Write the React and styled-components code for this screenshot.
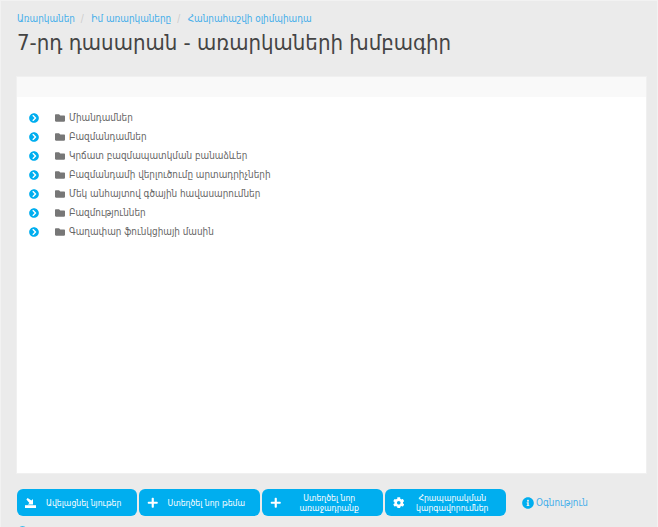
import React from 'react';
import styled, { createGlobalStyle } from 'styled-components';
import { FaChevronCircleRight, FaFolder, FaPlus, FaCog, FaInfoCircle } from 'react-icons/fa';

const GlobalStyle = createGlobalStyle`
  html, body {
    margin: 0;
    padding: 0;
    background: #ebebeb;
  }
  body {
    font-family: "DejaVu Sans", "Noto Sans", sans-serif;
    font-stretch: condensed;
    color: #555;
  }
`;

const Page = styled.div`
  height: 527px;
  overflow: hidden;
  box-sizing: border-box;
  padding: 9px 11px 0 16px;
  border: 1px solid #f2f2f2;
  border-bottom: 0;
`;

const Breadcrumb = styled.div`
  display: flex;
  align-items: center;
  height: 16px;
  font-size: 9.85px;
`;

const Crumb = styled.a`
  color: #45aeea;
`;

const Slash = styled.span`
  color: #ccc;
  padding: 0 7.5px 0 6px;
`;

const Title = styled.h1`
  margin: 2px 0 0;
  height: 49px;
  font-size: 22px;
  font-weight: 400;
  line-height: 30px;
  color: #444;
`;

const Panel = styled.div`
  height: 396px;
  background: #fff;
  outline: 1px solid #f0f0f0;
`;

const PanelHeading = styled.div`
  height: 20px;
  background: #f9f9f9;
`;

const TopicList = styled.ul`
  list-style: none;
  margin: 0;
  padding: 11px 0 0 12px;
`;

const Topic = styled.li`
  display: flex;
  align-items: center;
  height: 19px;
  font-size: 9.85px;
  color: #666;
`;

const Toggle = styled.span`
  display: flex;
  width: 26px;
  color: #00aeef;
  font-size: 10px;
`;

const FolderIcon = styled.span`
  display: flex;
  width: 14px;
  color: #777;
  font-size: 10px;
`;

const Toolbar = styled.div`
  display: flex;
  align-items: center;
  gap: 2px;
  margin-top: 16px;
`;

const Button = styled.button`
  display: flex;
  align-items: center;
  width: ${(p) => p.$width}px;
  height: 27px;
  padding: 0 8px 0 7.5px;
  border: 0;
  border-radius: 6px;
  background: #00aeef;
  color: #fff;
  font-family: inherit;
  font-stretch: inherit;
  font-size: 8.6px;
  line-height: 10px;
`;

const ButtonIcon = styled.span`
  display: flex;
  font-size: 11.5px;
  width: 14px;
`;

const ButtonLabel = styled.span`
  flex: 1;
  text-align: center;
`;

const HelpLink = styled.a`
  display: flex;
  align-items: center;
  gap: 2px;
  margin-left: 14px;
  font-size: 9.85px;
  color: #45aeea;
  svg {
    color: #00aeef;
    font-size: 12px;
  }
`;

const NextRow = styled.div`
  display: flex;
  margin-top: 10px;
  color: #00aeef;
  font-size: 11px;
`;

const topics = [
  'Միանդամներ',
  'Բազմանդամներ',
  'Կրճատ բազմապատկման բանաձևեր',
  'Բազմանդամի վերլուծումը արտադրիչների',
  'Մեկ անհայտով գծային հավասարումներ',
  'Բազմություններ',
  'Գաղափար ֆունկցիայի մասին',
];

const UploadIcon = () => (
  <svg width="11" height="10" viewBox="0 0 11 10" fill="currentColor">
    <path d="M2.6 0L6.4 2.6 8 1V6.6H2.8L4.4 5 1.4 1.4z" />
    <path d="M0 7.2h11V10H0z" />
  </svg>
);

const buttons = [
  { label: 'Ավելացնել նյութեր', width: 120, icon: <UploadIcon /> },
  { label: 'Ստեղծել նոր թեմա', width: 121, icon: <FaPlus /> },
  { label: 'Ստեղծել նոր առաջադրանք', width: 121, icon: <FaPlus /> },
  { label: 'Հրապարակման կարգավորումներ', width: 121, icon: <FaCog /> },
];

export default function App() {
  return (
    <Page>
      <GlobalStyle />
      <Breadcrumb>
        <Crumb>Առարկաներ</Crumb>
        <Slash>/</Slash>
        <Crumb>Իմ առարկաները</Crumb>
        <Slash>/</Slash>
        <Crumb>Հանրահաշվի օլիմպիադա</Crumb>
      </Breadcrumb>
      <Title>7-րդ դասարան - առարկաների խմբագիր</Title>
      <Panel>
        <PanelHeading />
        <TopicList>
          {topics.map((t) => (
            <Topic key={t}>
              <Toggle><FaChevronCircleRight /></Toggle>
              <FolderIcon><FaFolder /></FolderIcon>
              {t}
            </Topic>
          ))}
        </TopicList>
      </Panel>
      <Toolbar>
        {buttons.map((b) => (
          <Button key={b.label} $width={b.width}>
            <ButtonIcon>{b.icon}</ButtonIcon>
            <ButtonLabel>{b.label}</ButtonLabel>
          </Button>
        ))}
        <HelpLink><FaInfoCircle />Օգնություն</HelpLink>
      </Toolbar>
      <NextRow><FaInfoCircle /></NextRow>
    </Page>
  );
}
